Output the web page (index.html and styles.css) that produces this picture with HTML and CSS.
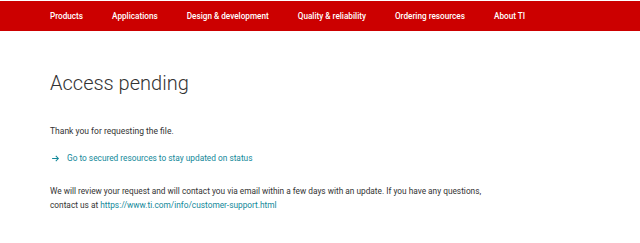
FILE: index.html
```html
<!DOCTYPE html>
<html lang="en">
<head>
  <meta charset="UTF-8" />
  <title>Access pending - TI</title>
  <link rel="stylesheet" href="styles.css">
</head>
<body>
  <header class="top-nav">
    <nav class="nav-links">
      <a href="#">Products</a>
      <a href="#">Applications</a>
      <a href="#">Design &amp; development</a>
      <a href="#">Quality &amp; reliability</a>
      <a href="#">Ordering resources</a>
      <a href="#">About TI</a>
    </nav>
  </header>

  <main class="content">
    <h1>Access pending</h1>
    <p class="intro">Thank you for requesting the file.</p>
    <a class="arrow-link" href="#">
      <svg width="9" height="9" viewBox="0 0 16 16" aria-hidden="true">
        <path d="M2 8h11M8.5 3.5L13 8l-4.5 4.5" fill="none" stroke="currentColor" stroke-width="1.8"/>
      </svg>
      <span>Go to secured resources to stay updated on status</span>
    </a>
    <p class="note">We will review your request and will contact you via email within a few days with an update. If you have any questions, contact us at <a href="#">https://www.ti.com/info/customer-support.html</a></p>
  </main>
</body>
</html>
```

FILE: styles.css
```css
* {
  margin: 0;
  padding: 0;
  box-sizing: border-box;
  font-family: Roboto, 'Liberation Sans', sans-serif;
}

body {
  background-color: #fff;
  color: #333;
}

a {
  text-decoration: none;
}

.top-nav {
  background-color: #cc0000;
  height: 30px;
  margin-top: 1px;
  display: flex;
  align-items: center;
  padding-left: 50px;
}

.nav-links {
  display: flex;
  gap: 29px;
}

.nav-links a {
  color: #fff;
  font-size: 8.2px;
  font-weight: 500;
}

.content {
  padding: 37px 50px 0;
  max-width: 545px;
}

h1 {
  font-size: 20px;
  font-weight: 300;
  color: #333;
  line-height: 30px;
  margin-bottom: 26px;
}

.intro {
  font-size: 8.5px;
  line-height: 14px;
  margin-bottom: 13px;
}

.arrow-link {
  display: flex;
  align-items: center;
  gap: 7px;
  color: #118899;
  font-size: 8.3px;
  line-height: 14px;
  padding-left: 1px;
  margin-bottom: 19px;
}

.note {
  font-size: 8.3px;
  line-height: 14px;
}

.note a {
  color: #118899;
}
```
